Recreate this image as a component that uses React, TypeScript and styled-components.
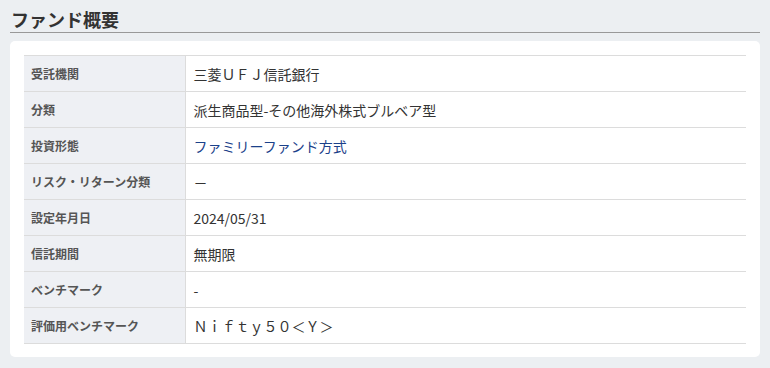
import { FunctionComponent } from 'react';
import styled, { createGlobalStyle } from 'styled-components';

const GlobalStyle = createGlobalStyle`
  html, body {
    margin: 0;
    padding: 0;
    background: #eceff2;
  }
  body {
    font-family: 'Noto Sans CJK JP', 'Noto Sans', sans-serif;
    color: #333;
  }
`;

type Row = {
  label: string;
  value: string;
  link?: boolean;
};

const rows: Row[] = [
  { label: '受託機関', value: '三菱ＵＦＪ信託銀行' },
  { label: '分類', value: '派生商品型-その他海外株式ブルベア型' },
  { label: '投資形態', value: 'ファミリーファンド方式', link: true },
  { label: 'リスク・リターン分類', value: '－' },
  { label: '設定年月日', value: '2024/05/31' },
  { label: '信託期間', value: '無期限' },
  { label: 'ベンチマーク', value: '-' },
  { label: '評価用ベンチマーク', value: 'Ｎｉｆｔｙ５０＜Ｙ＞' },
];

const Page = styled.div`
  padding: 0 10px;
`;

const Heading = styled.h2`
  margin: 0 0 8px;
  padding: 8px 1px 2px;
  font-size: 18px;
  line-height: 22px;
  font-weight: 700;
  color: #333;
  border-bottom: 1px solid #999;
`;

const Card = styled.section`
  background: #fff;
  border-radius: 5px;
  padding: 14px 14px 13px;
`;

const Table = styled.table`
  width: 100%;
  border-collapse: collapse;
`;

const TableRow = styled.tr`
  border-top: 1px solid #dcdcdc;
  border-bottom: 1px solid #dcdcdc;
`;

const Label = styled.th`
  width: 161px;
  height: 35px;
  padding: 0 7px;
  box-sizing: border-box;
  text-align: left;
  font-size: 12px;
  font-weight: 700;
  color: #555;
  background: #eef0f4;
  border-right: 1px solid #dcdcdc;
`;

const Value = styled.td<{ $link?: boolean }>`
  height: 35px;
  padding: 0 8px;
  font-size: 14px;
  color: ${({ $link }) => ($link ? '#1b418a' : '#333')};
`;

const App: FunctionComponent = (): JSX.Element => (
  <Page>
    <GlobalStyle />
    <Heading>ファンド概要</Heading>
    <Card>
      <Table>
        <tbody>
          {rows.map((row) => (
            <TableRow key={row.label}>
              <Label>{row.label}</Label>
              <Value $link={row.link}>{row.value}</Value>
            </TableRow>
          ))}
        </tbody>
      </Table>
    </Card>
  </Page>
);

export default App;
